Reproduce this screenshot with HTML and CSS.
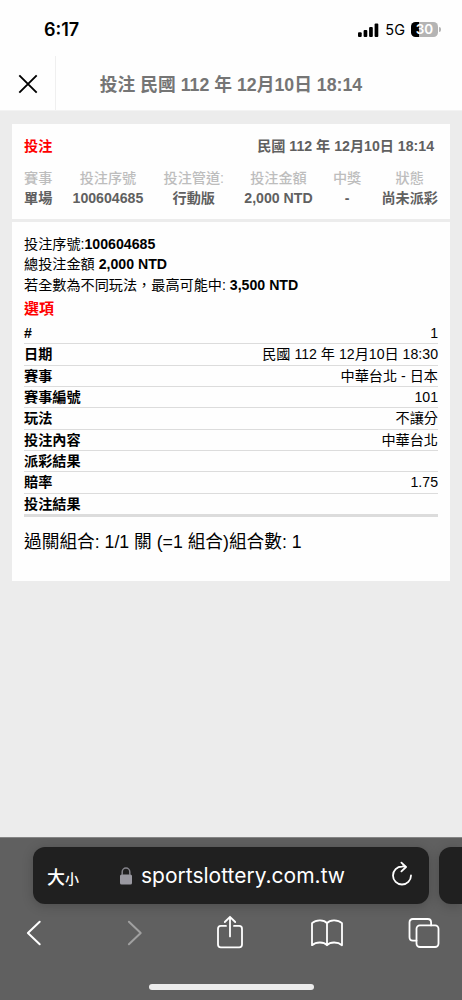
FILE: index.html
```html
<!DOCTYPE html>
<html lang="zh-TW">
<head>
    <meta charset="UTF-8">
    <meta name="viewport" content="width=device-width, initial-scale=1">
    <title>投注</title>
    <link rel="stylesheet" href="styles.css">
</head>
<body>
    <div class="status-bar">
        <span class="time">6:17</span>
        <div class="status-right">
            <svg class="signal" width="21" height="14" viewBox="0 0 21 14">
                <rect x="0" y="9.2" width="3.7" height="4.8" rx="1"/>
                <rect x="5.6" y="7" width="3.7" height="7" rx="1"/>
                <rect x="11.1" y="4" width="3.7" height="10" rx="1"/>
                <rect x="16.6" y="0.4" width="3.7" height="13.6" rx="1"/>
            </svg>
            <span class="network">5G</span>
            <div class="battery">30</div>
        </div>
    </div>

    <header class="page-header">
        <div class="close">
            <svg width="20" height="20" viewBox="0 0 20 20">
                <path d="M1.3 1.3L18.7 18.7M18.7 1.3L1.3 18.7"/>
            </svg>
        </div>
        <h1 class="page-title">投注 民國 112 年 12月10日 18:14</h1>
    </header>

    <main class="content">
        <section class="card bet-head">
            <div class="bet-top">
                <span class="bet-type">投注</span>
                <span class="bet-date">民國 112 年 12月10日 18:14</span>
            </div>
            <div class="bet-columns">
                <div class="column"><span class="label">賽事</span><span class="value">單場</span></div>
                <div class="column"><span class="label">投注序號</span><span class="value">100604685</span></div>
                <div class="column"><span class="label">投注管道:</span><span class="value">行動版</span></div>
                <div class="column"><span class="label">投注金額</span><span class="value">2,000 NTD</span></div>
                <div class="column"><span class="label">中獎</span><span class="value">-</span></div>
                <div class="column"><span class="label">狀態</span><span class="value">尚未派彩</span></div>
            </div>
        </section>

        <section class="card bet-detail">
            <p>投注序號:<b>100604685</b></p>
            <p>總投注金額 <b>2,000 NTD</b></p>
            <p>若全數為不同玩法，最高可能中: <b>3,500 NTD</b></p>
            <h2 class="options-title">選項</h2>
            <dl class="options">
                <div class="row"><dt>#</dt><dd>1</dd></div>
                <div class="row"><dt>日期</dt><dd>民國 112 年 12月10日 18:30</dd></div>
                <div class="row"><dt>賽事</dt><dd>中華台北 - 日本</dd></div>
                <div class="row"><dt>賽事編號</dt><dd>101</dd></div>
                <div class="row"><dt>玩法</dt><dd>不讓分</dd></div>
                <div class="row"><dt>投注內容</dt><dd>中華台北</dd></div>
                <div class="row"><dt>派彩結果</dt><dd></dd></div>
                <div class="row"><dt>賠率</dt><dd>1.75</dd></div>
                <div class="row"><dt>投注結果</dt><dd></dd></div>
            </dl>
            <p class="combination">過關組合: 1/1 關 (=1 組合)組合數: 1</p>
        </section>
    </main>

    <footer class="browser-bar">
        <div class="tabs">
            <div class="address">
                <span class="text-size">大<small>小</small></span>
                <div class="site">
                    <svg class="lock" width="12" height="18" viewBox="0 0 12 18">
                        <rect x="0" y="7.5" width="12" height="10" rx="1.6"/>
                        <path d="M2.2 8V5a3.8 4 0 0 1 7.6 0v3"/>
                    </svg>
                    <span class="domain">sportslottery.com.tw</span>
                </div>
                <svg class="line-icon reload" width="22" height="26" viewBox="0 0 22 26">
                    <path d="M14.6 5.9Q12.8 5.3 11 5.5A9 9 0 1 0 20 14.5"/>
                    <path d="M10.4 1.6L15 6L10.4 10.4"/>
                </svg>
            </div>
            <div class="next-tab"></div>
        </div>
        <nav class="toolbar">
            <svg class="line-icon back" width="32" height="26" viewBox="0 0 15 26">
                <path d="M13.2 1.8L1.4 13L13.2 24.2"/>
            </svg>
            <svg class="line-icon forward" width="32" height="26" viewBox="0 0 15 26">
                <path d="M1.4 1.8L13.2 13L1.4 24.2"/>
            </svg>
            <svg class="line-icon share" width="32" height="34" viewBox="0 0 26 34">
                <path d="M9 10.9H3.8Q1 10.9 1 13.7V29.5Q1 32.3 3.8 32.3H22.2Q25 32.3 25 29.5V13.7Q25 10.9 22.2 10.9H17"/>
                <path d="M13 21.4V1.8M7.8 7L13 1.8L18.2 7"/>
            </svg>
            <svg class="line-icon book" width="32" height="28" viewBox="0 0 32 28">
                <path d="M16 4.2C13.2 .6 5.2 .3 1 4.2V26.2C5.2 22.6 12.8 22.6 16 26.2C19.2 22.6 26.8 22.6 31 26.2V4.2C26.8 .3 18.8 .6 16 4.2V26.2"/>
            </svg>
            <svg class="line-icon windows" width="32" height="30" viewBox="0 0 31 30">
                <path d="M8 22.6H4.4Q1 22.6 1 19.2V4.4Q1 1 4.4 1H19.2Q22.6 1 22.6 4.4V7.4"/>
                <rect x="8" y="7.4" width="22" height="21.6" rx="3.4"/>
            </svg>
        </nav>
        <div class="home-indicator"></div>
    </footer>
</body>
</html>
```
FILE: styles.css
```css
* {
    box-sizing: border-box;
}

body {
    margin: 0;
    height: 1000px;
    display: flex;
    flex-direction: column;
    overflow: hidden;
    background: #ececec;
    color: #000;
    font-family: "Liberation Sans", "Noto Sans CJK TC", sans-serif;
    font-size: 14.15px;
}

h1, h2, p, dl, dd {
    margin: 0;
}

/* 狀態列 */
.status-bar {
    height: 56px;
    padding: 3px 21px 0 44px;
    display: flex;
    align-items: center;
    justify-content: space-between;
    background: #fefefe;
    font-family: Inter, sans-serif;
}
.time {
    font-size: 18px;
    font-weight: 600;
}
.status-right {
    display: flex;
    align-items: center;
}
.network {
    margin: 0 6px 0 6px;
    font-size: 14.5px;
}
.battery {
    position: relative;
    width: 27px;
    height: 15px;
    margin-right: 3px;
    border-radius: 4.5px;
    background: linear-gradient(90deg, #000 30%, #b4b4b4 30%);
    color: #fff;
    font-size: 13.5px;
    font-weight: 600;
    line-height: 15px;
    text-align: center;
}
.battery::after {
    content: "";
    position: absolute;
    top: 5px;
    right: -3px;
    width: 2px;
    height: 5px;
    border-radius: 0 2px 2px 0;
    background: #b4b4b4;
}

/* 頁首 */
.page-header {
    height: 55px;
    display: flex;
    background: #fefefe;
    border-bottom: 1px solid #f3f3f3;
}
.close {
    width: 56px;
    padding-top: 2px;
    display: flex;
    align-items: center;
    justify-content: center;
    border-right: 1px solid #efefef;
}
.close svg {
    fill: none;
    stroke: #000;
    stroke-width: 1.9;
}
.page-title {
    flex: 1;
    padding-right: 56px;
    color: #757575;
    font-size: 17.75px;
    line-height: 58px;
    text-align: center;
    white-space: nowrap;
}

.content {
    flex: 1;
    padding: 13px 12px;
}
.card {
    padding: 0 12px;
    background: #fefefe;
}

/* 投注摘要 */
.bet-head {
    height: 95px;
    padding-top: 12px;
    margin-bottom: 3px;
    font-weight: bold;
    color: #606060;
}
.bet-top {
    display: flex;
    justify-content: space-between;
    padding-right: 4px;
    margin-bottom: 12px;
    line-height: 20px;
}
.bet-type {
    color: #f00;
}
.bet-columns {
    display: flex;
    justify-content: space-between;
}
.column {
    display: flex;
    flex-direction: column;
    align-items: center;
    line-height: 20px;
}
.label {
    color: #bdbdbd;
    font-weight: 500;
}

/* 投注內容 */
.bet-detail {
    height: 359px;
    padding-top: 12px;
    line-height: 20.3px;
}
.options-title {
    margin: 4px 0 4px;
    color: #f00;
    font-size: 15px;
    line-height: 20px;
}
.row {
    height: 21.35px;
    display: flex;
    justify-content: space-between;
    border-bottom: 1px solid #dcdcdc;
}
.row:last-child {
    height: 23px;
    border-bottom-width: 3px;
}
dt {
    font-weight: bold;
}
.combination {
    margin-top: 12px;
    font-size: 17.7px;
    line-height: 26px;
}

/* 瀏覽器工具列 */
.browser-bar {
    height: 163px;
    padding-top: 9px;
    background: #606060;
    border-top: 1px solid #858585;
}
.tabs {
    display: flex;
    gap: 10px;
    padding-left: 33px;
}
.address {
    width: 396px;
    height: 57px;
    display: flex;
    align-items: center;
    justify-content: space-between;
    padding: 0 16px 0 14px;
    border-radius: 12px;
    background: #202020;
    box-shadow: 0 2px 12px rgba(0, 0, 0, 0.2);
    color: #fff;
}
.next-tab {
    flex: 1;
    border-radius: 12px 0 0 12px;
    background: #202020;
    box-shadow: 0 2px 12px rgba(0, 0, 0, 0.2);
}
.text-size {
    font-size: 18px;
    font-weight: 500;
}
.text-size small {
    font-size: 14px;
}
.site {
    display: flex;
    align-items: center;
    gap: 9px;
    margin-right: 5px;
}
.lock {
    fill: #9a99a1;
}
.lock path {
    fill: none;
    stroke: #85848b;
    stroke-width: 1.5;
}
.domain {
    font-family: Inter, sans-serif;
    font-size: 21px;
}
.line-icon {
    fill: none;
    stroke: #fff;
    stroke-width: 1.8;
    stroke-linecap: round;
    stroke-linejoin: round;
}
.reload {
    margin-bottom: 3px;
}
.toolbar {
    height: 58px;
    display: flex;
    align-items: center;
    justify-content: space-between;
    padding: 0 22px 0 18px;
}
.back,
.forward {
    stroke-width: 2;
}
.forward {
    margin: 0 -3px 0 3px;
    stroke: #a0a0a0;
}
.share {
    margin: 0 -1px 2px 1px;
}
.home-indicator {
    width: 165px;
    height: 6px;
    margin: 22px auto 0;
    border-radius: 3px;
    background: #ececec;
}
```
